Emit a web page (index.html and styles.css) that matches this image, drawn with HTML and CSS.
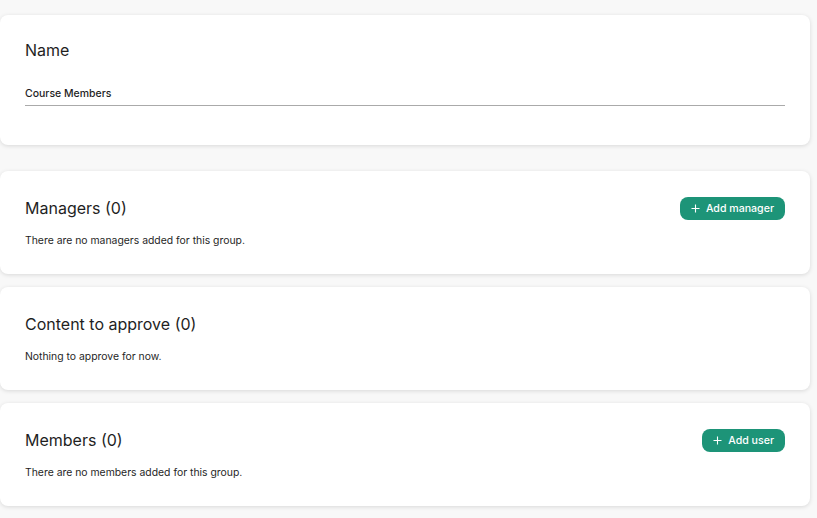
FILE: index.html
```html
<!DOCTYPE html>
<html lang="en">
<head>
    <meta charset="UTF-8">
    <meta name="viewport" content="width=device-width, initial-scale=1.0">
    <title>Group settings</title>
    <link rel="stylesheet" href="styles.css">
</head>
<body>
    <div class="page">
        <div class="card card-name">
            <h2 class="title">Name</h2>
            <div class="field">Course Members</div>
        </div>

        <div class="card card-first">
            <div class="card-head">
                <h2 class="title">Managers (0)</h2>
                <button class="btn">
                    <svg width="9" height="9" viewBox="0 0 9 9"><path d="M4.5 0.5v8M0.5 4.5h8" stroke="#fff" stroke-width="1.1"/></svg>
                    Add manager
                </button>
            </div>
            <p class="empty">There are no managers added for this group.</p>
        </div>

        <div class="card">
            <div class="card-head">
                <h2 class="title">Content to approve (0)</h2>
            </div>
            <p class="empty">Nothing to approve for now.</p>
        </div>

        <div class="card">
            <div class="card-head">
                <h2 class="title">Members (0)</h2>
                <button class="btn">
                    <svg width="9" height="9" viewBox="0 0 9 9"><path d="M4.5 0.5v8M0.5 4.5h8" stroke="#fff" stroke-width="1.1"/></svg>
                    Add user
                </button>
            </div>
            <p class="empty">There are no members added for this group.</p>
        </div>
    </div>
</body>
</html>
```

FILE: styles.css
```css
body {
    margin: 0;
    background-color: #f8f8f8;
    font-family: Inter, "Noto Sans", sans-serif;
    color: #1f1f1f;
}

.page {
    padding: 15px 7px 20px 0;
    display: flex;
    flex-direction: column;
    gap: 13px;
}

.card {
    background: #fff;
    border-radius: 8px;
    box-shadow: 0 1px 4px rgba(0, 0, 0, 0.13);
    padding: 25px;
}

.card-name {
    padding-bottom: 39px;
}

.card-first {
    margin-top: 13px;
}

.title {
    margin: 0;
    font-size: 16px;
    font-weight: 400;
    line-height: 20px;
}

.card-name .title {
    margin-bottom: 27px;
}

.field {
    font-size: 10.5px;
    font-weight: 500;
    line-height: 14px;
    padding-bottom: 4px;
    border-bottom: 1px solid #aaa;
}

.card-head {
    display: flex;
    justify-content: space-between;
    align-items: center;
    height: 24px;
}

.btn {
    display: flex;
    align-items: center;
    gap: 6px;
    height: 23px;
    padding: 0 11px;
    border: none;
    border-radius: 8px;
    background-color: #1d9478;
    color: #fff;
    font-family: inherit;
    font-size: 10.6px;
    font-weight: 500;
    cursor: pointer;
}

.empty {
    margin: 13px 0 0;
    font-size: 10.4px;
    line-height: 16px;
}
```
